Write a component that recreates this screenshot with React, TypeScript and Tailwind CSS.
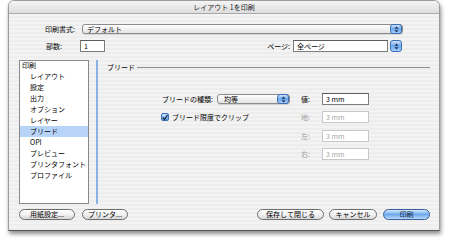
import React from 'react';

const jp = "font-['Noto_Sans_CJK_JP','Noto_Sans',sans-serif]";

const Stepper: React.FC<{ h?: string }> = ({ h = 'h-[10px]' }) => (
  <div
    className={`w-[12px] ${h} rounded-[3px] border border-[#3c6fb8] bg-gradient-to-b from-[#cfe4fb] via-[#6aa6ec] to-[#a9d0fa] flex items-center justify-center`}
  >
    <svg width="5" height="7" viewBox="0 0 5 7">
      <path d="M2.5 0.5 L4.5 2.8 L0.5 2.8 Z" fill="#1d2f55" />
      <path d="M2.5 6.5 L4.5 4.2 L0.5 4.2 Z" fill="#1d2f55" />
    </svg>
  </div>
);

const PopUp: React.FC<{ value: string; width: string; pad: string }> = ({ value, width, pad }) => (
  <div
    className={`${width} h-[10px] flex items-center rounded-[3px] border border-[#8c8c8c] bg-gradient-to-b from-white to-[#e4e4e4] shadow-[0_1px_0_rgba(0,0,0,0.12)]`}
  >
    <span className={`flex-1 ${pad} text-[7px] leading-none text-black`}>{value}</span>
    <Stepper h="h-[10px]" />
  </div>
);

const Field: React.FC<{ value: string; width: string; disabled?: boolean }> = ({ value, width, disabled }) => (
  <div
    className={`${width} h-[12px] flex items-center bg-white border ${
      disabled ? 'border-[#c8c8c8] text-[#a6a6a6]' : 'border-[#7c7c7c] border-t-[#5c5c5c] text-black'
    } pl-[3px] text-[7px] leading-none`}
  >
    {value}
  </div>
);

const Button: React.FC<{ label: string; width: string; primary?: boolean }> = ({ label, width, primary }) => (
  <div
    className={`${width} h-[11px] flex items-center justify-center rounded-full border text-[7px] leading-none ${
      primary
        ? 'border-[#3a5f9c] bg-gradient-to-b from-[#d4e9fd] via-[#6ea9ee] to-[#b9dafc] text-[#10203a]'
        : 'border-[#6e6e6e] bg-gradient-to-b from-white via-[#f2f2f2] to-[#d6d6d6] text-black'
    }`}
  >
    {label}
  </div>
);

const items = ['レイアウト', '設定', '出力', 'オプション', 'レイヤー', 'ブリード', 'OPI', 'プレビュー', 'プリンタフォント', 'プロファイル'];

export default function App() {
  return (
    <div className={`w-[450px] h-[244px] bg-white pl-[8px] ${jp}`}>
      <div className="w-[432px] h-[231px] flex flex-col rounded-t-[6px] border border-[#9c9c9c] border-b-[#555] shadow-[1px_3px_4px_rgba(0,0,0,0.45)] bg-[repeating-linear-gradient(0deg,#ededed_0px,#ededed_2px,#f3f3f3_2px,#f3f3f3_4px)] overflow-hidden">
        <div className="h-[13px] flex items-center justify-center border-b border-[#a9a9a9] bg-gradient-to-b from-[#f4f4f4] to-[#dedede] text-[7px] leading-none text-[#222]">
          レイアウト 1を印刷
        </div>

        <div className="flex items-center mt-[10px] pl-[36px] h-[10px]">
          <span className="w-[37px] text-[7px] leading-none">印刷書式:</span>
          <PopUp value="デフォルト" width="w-[321px]" pad="pl-[4px]" />
        </div>

        <div className="flex items-center mt-[6px] pl-[37px] pr-[37px] h-[12px]">
          <span className="w-[34px] text-[7px] leading-none">部数:</span>
          <Field value="1" width="w-[25px]" />
          <span className="ml-auto mr-[3px] text-[7px] leading-none">ページ:</span>
          <Field value="全ページ" width="w-[95px]" />
          <div className="ml-[2px]">
            <Stepper h="h-[12px]" />
          </div>
        </div>

        <div className="flex mt-[8px] pl-[10px] pr-[9px] h-[144px]">
          <div className="w-[70px] h-full bg-white border border-[#8a8a8a] text-[7px] leading-[11px]">
            <div className="h-[11px] pl-[2px] -mt-[1px]">印刷</div>
            {items.map((it) => (
              <div key={it} className={`h-[11px] pl-[10px] ${it === 'ブリード' ? 'bg-[#b7d4f8]' : ''}`}>
                {it}
              </div>
            ))}
          </div>
          <div className="ml-[7px] w-[2px] h-full bg-[#8ab2e8]" />
          <div className="flex-1 pl-[9px] flex flex-col">
            <div className="flex items-center mt-[3px] h-[9px]">
              <span className="text-[7px] leading-none">ブリード</span>
              <div className="flex-1 ml-[2px] h-px bg-[#8e8e8e]" />
            </div>
            <div className="flex mt-[21px]">
              <div className="w-[194px] flex flex-col">
                <div className="h-[12px] flex items-center justify-end pr-[11px]">
                  <span className="mr-[4px] text-[7px] leading-none">ブリードの種類:</span>
                  <PopUp value="均等" width="w-[73px]" pad="pl-[6px]" />
                </div>
                <div className="h-[12px] mt-[6px] flex items-center pl-[54px]">
                  <div className="w-[8px] h-[8px] rounded-[2px] border border-[#3c6fb8] bg-gradient-to-b from-[#cfe4fb] to-[#5a9ae6] flex items-center justify-center">
                    <svg width="7" height="7" viewBox="0 0 7 7">
                      <path d="M1 3.5 L3 5.8 L6.5 0.5" stroke="#14233f" strokeWidth="1.4" fill="none" />
                    </svg>
                  </div>
                  <span className="ml-[3px] text-[7px] leading-none">ブリード限度でクリップ</span>
                </div>
              </div>
              <div className="flex flex-col">
                <div className="h-[12px] flex items-center">
                  <span className="w-[21px] text-[7px] leading-none">値:</span>
                  <Field value="3 mm" width="w-[47px]" />
                </div>
                <div className="h-[12px] mt-[6px] flex items-center">
                  <span className="w-[21px] text-[7px] leading-none text-[#a0a0a0]">地:</span>
                  <Field value="3 mm" width="w-[47px]" disabled />
                </div>
                <div className="h-[12px] mt-[7px] flex items-center">
                  <span className="w-[21px] text-[7px] leading-none text-[#a0a0a0]">左:</span>
                  <Field value="3 mm" width="w-[47px]" disabled />
                </div>
                <div className="h-[12px] mt-[6px] flex items-center">
                  <span className="w-[21px] text-[7px] leading-none text-[#a0a0a0]">右:</span>
                  <Field value="3 mm" width="w-[47px]" disabled />
                </div>
              </div>
            </div>
          </div>
        </div>

        <div className="flex items-center mt-[5px] pl-[10px] pr-[9px] h-[11px]">
          <Button label="用紙設定..." width="w-[56px]" />
          <div className="ml-[7px]">
            <Button label="プリンタ..." width="w-[46px]" />
          </div>
          <div className="ml-auto">
            <Button label="保存して閉じる" width="w-[67px]" />
          </div>
          <div className="ml-[5px]">
            <Button label="キャンセル" width="w-[48px]" />
          </div>
          <div className="ml-[6px]">
            <Button label="印刷" width="w-[47px]" primary />
          </div>
        </div>
      </div>
    </div>
  );
}
